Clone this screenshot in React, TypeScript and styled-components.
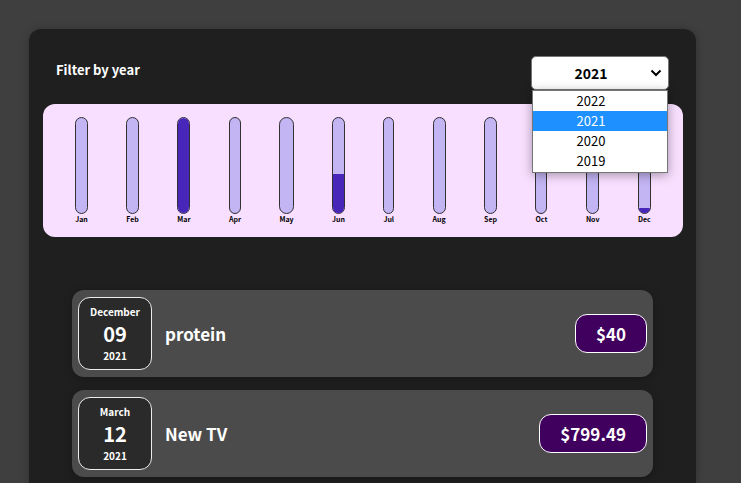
import React, { useState } from "react";
import styled, { createGlobalStyle } from "styled-components";

const GlobalStyle = createGlobalStyle`
  * {
    box-sizing: border-box;
  }
  body {
    margin: 0;
    background: #3f3f3f;
    font-family: "Noto Sans CJK JP", "Noto Sans", sans-serif;
  }
`;

const Page = styled.main`
  display: flex;
  flex-direction: column;
  min-height: 100vh;
  padding: 29px 45px 0 29px;
`;

const ExpensesCard = styled.section`
  flex: 1;
  padding: 27px 13px 0 14px;
  border-radius: 12px 12px 0 0;
  background: #1f1f1f;
  box-shadow: 0 1px 8px rgba(0, 0, 0, 0.25);
`;

const Filter = styled.div`
  display: flex;
  align-items: flex-start;
  justify-content: space-between;
  padding: 0 14px 0 13px;
  margin-bottom: 14px;
  color: #fff;
`;

const FilterLabel = styled.label`
  font-size: 13px;
  line-height: 28px;
  font-weight: 700;
`;

const SelectWrap = styled.div`
  position: relative;
  width: 138px;
`;

const YearSelect = styled.select`
  display: block;
  appearance: none;
  width: 100%;
  height: 34px;
  padding: 0 18px 0 0;
  border: 1px solid #767676;
  border-radius: 5px;
  background: #fff;
  color: #000;
  font: 700 14px "Noto Sans CJK JP", "Noto Sans", sans-serif;
  text-align: center;
  text-align-last: center;
`;

const Chevron = styled.svg`
  position: absolute;
  top: 13px;
  right: 7px;
  width: 12px;
  height: 8px;
  pointer-events: none;
`;

const Options = styled.ul`
  position: absolute;
  z-index: 2;
  top: 100%;
  left: 1px;
  right: 1px;
  margin: 0;
  padding: 0 0 1px;
  border: 1px solid #767676;
  background: #fff;
  box-shadow: 0 2px 10px rgba(0, 0, 0, 0.35);
  list-style: none;
`;

const Option = styled.li<{ $selected: boolean }>`
  padding-right: 18px;
  background: ${(p) => (p.$selected ? "#1e90ff" : "#fff")};
  color: ${(p) => (p.$selected ? "#fff" : "#000")};
  font-size: 13px;
  line-height: 20px;
  text-align: center;
  cursor: default;
`;

const Chart = styled.div`
  display: flex;
  justify-content: space-around;
  padding: 13px 13px 12px;
  border-radius: 12px;
  background: #f8dfff;
`;

const Month = styled.div`
  display: flex;
  flex-direction: column;
  align-items: center;
`;

const Bar = styled.div`
  display: flex;
  flex-direction: column;
  justify-content: flex-end;
  width: 100%;
  height: 97px;
  border: 1px solid #313131;
  border-radius: 12px;
  background: #c3b4f3;
  overflow: hidden;
`;

const BarFill = styled.div`
  background: #4826b9;
`;

const MonthLabel = styled.div`
  color: #000;
  font-size: 7px;
  line-height: 11px;
  font-weight: 700;
  text-align: center;
`;

const ExpenseList = styled.ul`
  display: flex;
  flex-direction: column;
  gap: 13px;
  margin: 53px 0 0;
  padding: 0 30px 0 29px;
  list-style: none;
`;

const ExpenseItem = styled.li`
  display: flex;
  align-items: center;
  gap: 13px;
  padding: 7px 6px;
  border-radius: 12px;
  background: #4b4b4b;
  box-shadow: 0 2px 8px rgba(0, 0, 0, 0.25);
  color: #fff;
`;

const DateBox = styled.time`
  display: flex;
  flex-direction: column;
  align-items: center;
  justify-content: center;
  width: 74px;
  height: 73px;
  border: 1px solid #ececec;
  border-radius: 12px;
  background: #2a2a2a;
  font-weight: 700;
`;

const DateSmall = styled.span`
  font-size: 10px;
  line-height: 16px;
`;

const DateDay = styled.span`
  font-size: 20px;
  line-height: 28px;
`;

const Title = styled.h2`
  flex: 1;
  margin: 0;
  font-size: 17px;
  line-height: 24px;
  font-weight: 700;
`;

const Price = styled.div`
  padding: 0 20px;
  border: 1px solid #fff;
  border-radius: 12px;
  background: #40005d;
  font-size: 17px;
  line-height: 37px;
  font-weight: 700;
`;

const years = ["2022", "2021", "2020", "2019"];

const months = [
  { name: "Jan", fill: 0 },
  { name: "Feb", fill: 0 },
  { name: "Mar", fill: 100 },
  { name: "Apr", fill: 0 },
  { name: "May", fill: 0 },
  { name: "Jun", fill: 41 },
  { name: "Jul", fill: 0 },
  { name: "Aug", fill: 0 },
  { name: "Sep", fill: 0 },
  { name: "Oct", fill: 0 },
  { name: "Nov", fill: 0 },
  { name: "Dec", fill: 5 },
];

const expenses = [
  { iso: "2021-12-09", month: "December", day: "09", year: "2021", title: "protein", price: "$40" },
  { iso: "2021-03-12", month: "March", day: "12", year: "2021", title: "New TV", price: "$799.49" },
];

export default function App() {
  const [year, setYear] = useState("2021");

  return (
    <>
      <GlobalStyle />
      <Page>
        <ExpensesCard>
          <Filter>
            <FilterLabel htmlFor="year">Filter by year</FilterLabel>
            <SelectWrap>
              <YearSelect id="year" value={year} onChange={(e) => setYear(e.target.value)}>
                {years.map((y) => (
                  <option key={y} value={y}>
                    {y}
                  </option>
                ))}
              </YearSelect>
              <Chevron viewBox="0 0 12 8" aria-hidden="true">
                <path d="M1.5 1.5 6 6l4.500-4.500" fill="none" stroke="#000" strokeWidth="2" />
              </Chevron>
              <Options role="listbox" aria-label="Year">
                {years.map((y) => (
                  <Option
                    key={y}
                    role="option"
                    aria-selected={y === year}
                    $selected={y === year}
                    onClick={() => setYear(y)}
                  >
                    {y}
                  </Option>
                ))}
              </Options>
            </SelectWrap>
          </Filter>
          <Chart>
            {months.map((m) => (
              <Month key={m.name}>
                <Bar>
                  <BarFill style={{ height: `${m.fill}%` }} />
                </Bar>
                <MonthLabel>{m.name}</MonthLabel>
              </Month>
            ))}
          </Chart>
          <ExpenseList>
            {expenses.map((e) => (
              <ExpenseItem key={e.iso}>
                <DateBox dateTime={e.iso}>
                  <DateSmall>{e.month}</DateSmall>
                  <DateDay>{e.day}</DateDay>
                  <DateSmall>{e.year}</DateSmall>
                </DateBox>
                <Title>{e.title}</Title>
                <Price>{e.price}</Price>
              </ExpenseItem>
            ))}
          </ExpenseList>
        </ExpensesCard>
      </Page>
    </>
  );
}
